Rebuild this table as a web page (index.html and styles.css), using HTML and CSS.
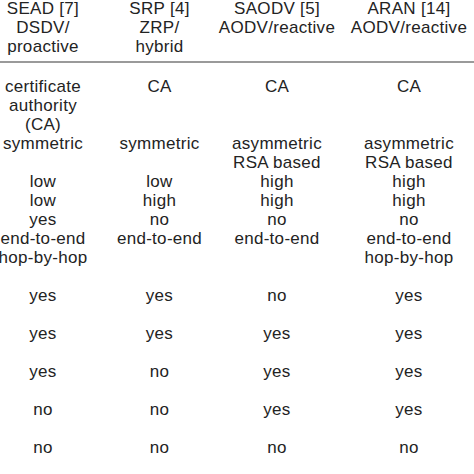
FILE: index.html
```html
<!DOCTYPE html>
<html>
<head>
<meta charset="utf-8">
<link rel="stylesheet" href="styles.css">
</head>
<body>
<div class="table">
  <div class="head">
    <div class="cell">SEAD [7]<br>DSDV/<br>proactive</div>
    <div class="cell">SRP [4]<br>ZRP/<br>hybrid</div>
    <div class="cell">SAODV [5]<br>AODV/reactive</div>
    <div class="cell">ARAN [14]<br>AODV/reactive</div>
  </div>
  <div class="rule"></div>
  <div class="body">
    <div class="cell">certificate<br>authority<br>(CA)</div>
    <div class="cell">CA</div>
    <div class="cell">CA</div>
    <div class="cell">CA</div>

    <div class="cell">symmetric</div>
    <div class="cell">symmetric</div>
    <div class="cell">asymmetric<br>RSA based</div>
    <div class="cell">asymmetric<br>RSA based</div>

    <div class="cell">low</div>
    <div class="cell">low</div>
    <div class="cell">high</div>
    <div class="cell">high</div>

    <div class="cell">low</div>
    <div class="cell">high</div>
    <div class="cell">high</div>
    <div class="cell">high</div>

    <div class="cell">yes</div>
    <div class="cell">no</div>
    <div class="cell">no</div>
    <div class="cell">no</div>

    <div class="cell">end-to-end<br>hop-by-hop</div>
    <div class="cell">end-to-end</div>
    <div class="cell">end-to-end</div>
    <div class="cell">end-to-end<br>hop-by-hop</div>

    <div class="cell sp">yes</div>
    <div class="cell sp">yes</div>
    <div class="cell sp">no</div>
    <div class="cell sp">yes</div>

    <div class="cell sp">yes</div>
    <div class="cell sp">yes</div>
    <div class="cell sp">yes</div>
    <div class="cell sp">yes</div>

    <div class="cell sp">yes</div>
    <div class="cell sp">no</div>
    <div class="cell sp">yes</div>
    <div class="cell sp">yes</div>

    <div class="cell sp">no</div>
    <div class="cell sp">no</div>
    <div class="cell sp">yes</div>
    <div class="cell sp">yes</div>

    <div class="cell sp">no</div>
    <div class="cell sp">no</div>
    <div class="cell sp">no</div>
    <div class="cell sp">no</div>
  </div>
</div>
</body>
</html>
```
FILE: styles.css
```css
html, body {
  margin: 0;
  padding: 0;
  background: #ffffff;
  overflow: hidden;
}
body {
  width: 474px;
  height: 474px;
  font-family: "Liberation Sans", Arial, sans-serif;
  font-size: 17px;
  line-height: 19px;
  letter-spacing: 0.3px;
  color: #232323;
}
.table {
  margin-top: -1px;
  margin-left: -15px;
  width: 497px;
}
.head, .body {
  display: grid;
  grid-template-columns: 116px 117px 118px 146px;
}
.head {
  height: 57px;
  padding-bottom: 5px;
}
.cell {
  text-align: center;
  white-space: nowrap;
}
.rule {
  height: 2px;
  background: #9a9a9a;
  margin-left: 15px;
  width: 474px;
}
.body {
  padding-top: 14px;
}
.sp {
  padding-top: 19px;
}
```
